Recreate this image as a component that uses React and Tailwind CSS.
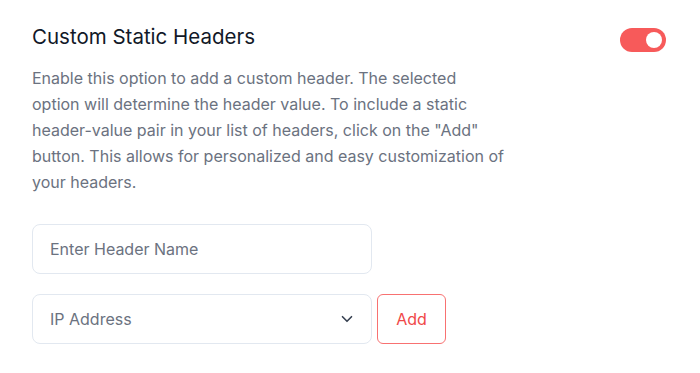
import { ChevronDown } from 'lucide-react';

export default function App() {
  return (
    <div className="w-[700px] h-[373px] bg-white pl-8 pr-[34px] pt-[23px] font-['Inter',sans-serif]">
      {/* Header row */}
      <div className="flex items-start justify-between">
        <h2 className="text-[20.5px] leading-[28px] font-normal text-[#111827]">Custom Static Headers</h2>
        <button className="mt-[5px] w-[46px] h-[24px] rounded-full bg-[#f75a5a] flex items-center justify-end pr-[4px]">
          <span className="block w-[16px] h-[16px] rounded-full bg-white" />
        </button>
      </div>

      <p className="mt-[13px] w-[472px] text-[16px] leading-[26px] text-[#6b7280]">
        Enable this option to add a custom header. The selected option will determine the header value. To include a static header-value pair in your list of headers, click on the "Add" button. This allows for personalized and easy customization of your headers.
      </p>

      <div className="mt-[29px] flex flex-col gap-5">
        <input
          className="w-[340px] h-[50px] rounded-lg border border-[#e2e8f0] px-[17px] text-[16px] text-[#374151] placeholder:text-[#6b7280] outline-none"
          placeholder="Enter Header Name"
        />
        <div className="flex items-center gap-[5px]">
          <div className="w-[340px] h-[50px] rounded-lg border border-[#e2e8f0] pl-[17px] pr-[15px] flex items-center justify-between text-[16px] text-[#6b7280]">
            <span>IP Address</span>
            <ChevronDown size={18} strokeWidth={2.2} className="text-[#374151]" />
          </div>
          <button className="w-[69px] h-[50px] rounded-md border border-[#f87171] text-[16px] text-[#f04848]">
            Add
          </button>
        </div>
      </div>
    </div>
  );
}
